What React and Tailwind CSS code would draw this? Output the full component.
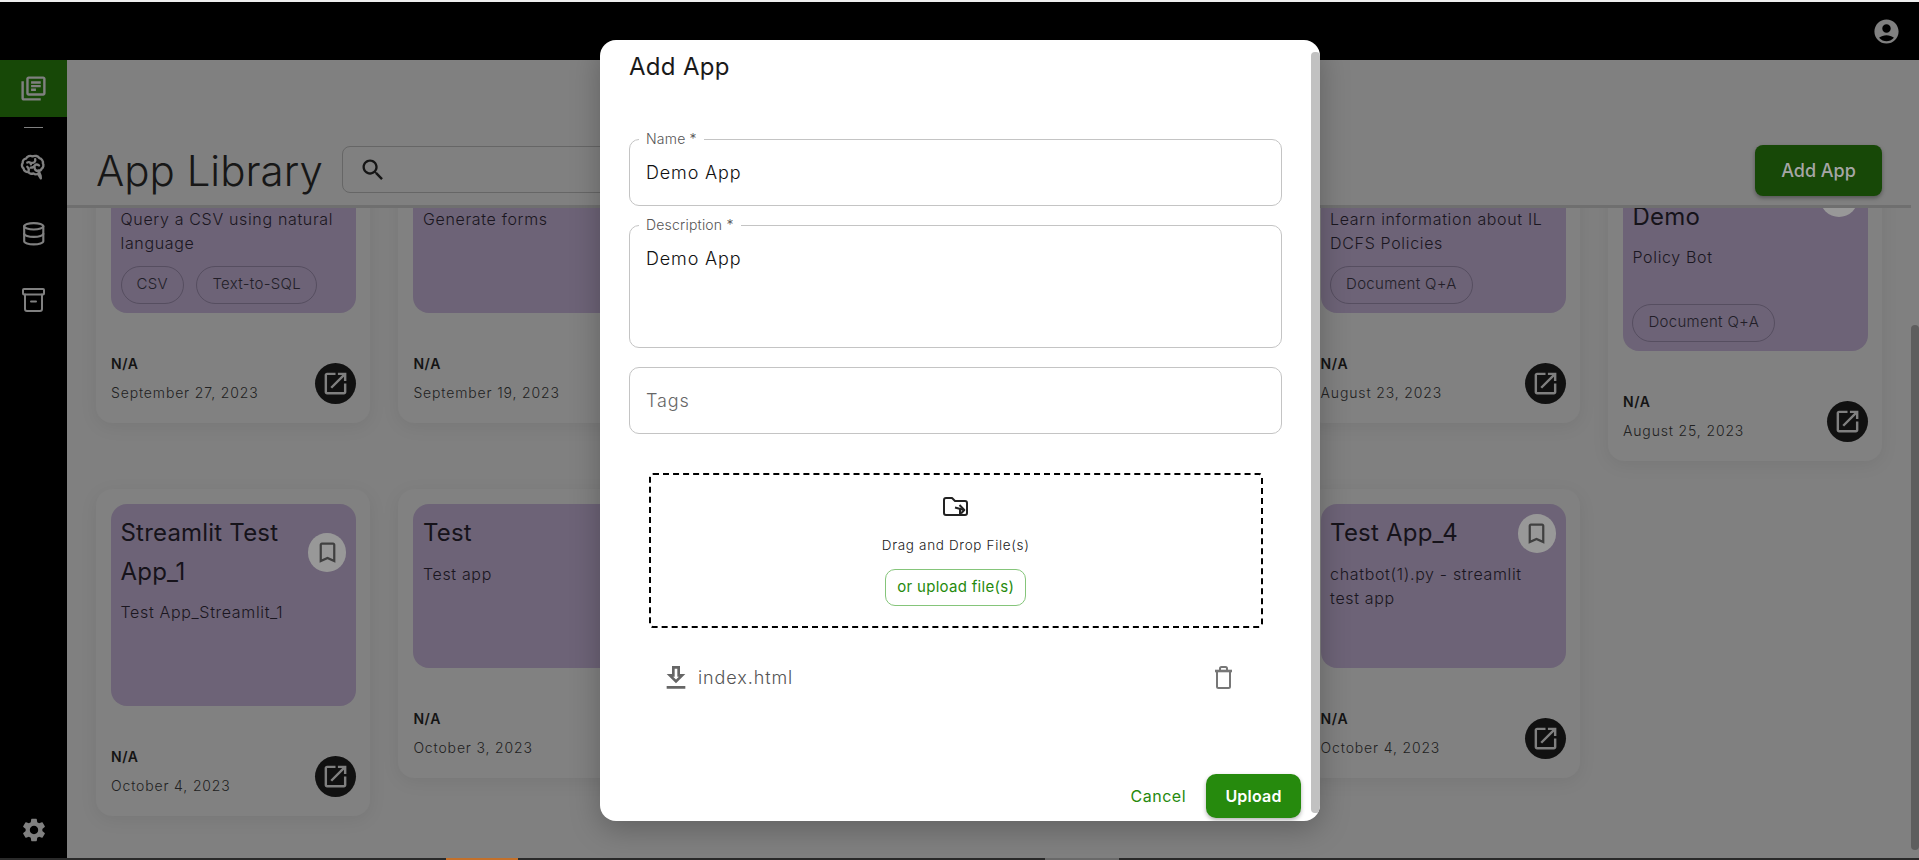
import React from "react";
import { LuDatabase } from "react-icons/lu";

const P = {
  user: "M12 2C6.48 2 2 6.48 2 12s4.48 10 10 10 10-4.48 10-10S17.52 2 12 2zm0 4c1.93 0 3.5 1.57 3.5 3.5S13.93 13 12 13s-3.5-1.57-3.5-3.5S10.07 6 12 6zm0 14c-2.03 0-4.43-.82-6.14-2.88C7.55 15.8 9.68 15 12 15s4.45.8 6.14 2.12C16.43 19.18 14.03 20 12 20z",
  search: "M15.5 14h-.79l-.28-.27C15.41 12.59 16 11.11 16 9.5 16 5.91 13.09 3 9.5 3S3 5.91 3 9.5 5.91 16 9.5 16c1.61 0 3.09-.59 4.23-1.57l.27.28v.79l5 4.99L20.49 19l-4.99-5zm-6 0C7.01 14 5 11.99 5 9.5S7.01 5 9.5 5 14 7.01 14 9.5 11.99 14 9.5 14z",
  open: "M19 19H5V5h7V3H5c-1.11 0-2 .9-2 2v14c0 1.1.89 2 2 2h14c1.1 0 2-.9 2-2v-7h-2v7zM14 3v2h3.59l-9.83 9.83 1.41 1.41L19 6.41V10h2V3h-7z",
  gear: "M19.14 12.94c.04-.3.06-.61.06-.94 0-.32-.02-.64-.07-.94l2.03-1.58c.18-.14.23-.41.12-.61l-1.92-3.32c-.12-.22-.37-.29-.59-.22l-2.39.96c-.5-.38-1.03-.7-1.62-.94l-.36-2.54c-.04-.24-.24-.41-.48-.41h-3.84c-.24 0-.43.17-.47.41l-.36 2.54c-.59.24-1.13.57-1.62.94l-2.39-.96c-.22-.08-.47 0-.59.22L2.74 8.87c-.12.21-.08.47.12.61l2.03 1.58c-.05.3-.09.63-.09.94s.02.64.07.94l-2.03 1.58c-.18.14-.23.41-.12.61l1.92 3.32c.12.22.37.29.59.22l2.39-.96c.5.38 1.03.7 1.62.94l.36 2.54c.05.24.24.41.48.41h3.84c.24 0 .44-.17.47-.41l.36-2.54c.59-.24 1.13-.56 1.62-.94l2.39.96c.22.08.47 0 .59-.22l1.92-3.32c.12-.22.07-.47-.12-.61l-2.01-1.58zM12 15.6c-1.98 0-3.6-1.62-3.6-3.6s1.62-3.6 3.6-3.6 3.6 1.62 3.6 3.6-1.62 3.6-3.6 3.6z",
  library: "M4 6H2v14c0 1.1.9 2 2 2h14v-2H4V6zm16-4H8c-1.1 0-2 .9-2 2v12c0 1.1.9 2 2 2h12c1.1 0 2-.9 2-2V4c0-1.1-.9-2-2-2zm0 14H8V4h12v12zM10 9h8v2h-8zm0 3h4v2h-4zm0-6h8v2h-8z",
  download: "M19 9h-4V3H9v6H5l7 7 7-7zm-8 2V5h2v6h1.17L12 13.17 9.83 11H11zm-6 7h14v2H5z",
  bookmark: "M17 3H7c-1.1 0-1.99.9-1.99 2L5 21l7-3 7 3V5c0-1.1-.9-2-2-2zm0 15l-5-2.18L7 18V5h10v13z",
};

function Icon({ d, className }) {
  return (
    <svg viewBox="0 0 24 24" fill="currentColor" className={className}>
      <path d={d} />
    </svg>
  );
}

function BrainIcon({ className }) {
  return (
    <svg viewBox="0 0 24 24" fill="none" stroke="currentColor" strokeWidth="2.1" strokeLinecap="round" strokeLinejoin="round" className={className}>
      <path d="M18.5 22.5l-2.6-4.2c-1.1.8-2.9.7-4-.2-1.6.8-3.6.3-4.3-1.2-2.1.3-4.2-1-4.4-3.1-1.6-1.1-2-3.5-.8-5 -.2-2 1.2-3.6 3-3.8.9-2 3.6-3 5.7-2 2.1-1 5-.4 6.1 1.6 2 .5 3.6 2.5 3.1 4.5 1 1.6.5 3.9-1.1 4.9-.3 1.2-1.3 1.9-2.6 1.9l1.7 4.2z" />
      <path d="M6.5 8.5c1.5-.9 3.2 0 3.2 1.6" />
      <path d="M13.5 5.5c.6 2-1 3.5-3.2 3.3" />
      <path d="M9.5 13c1.8 0 3.3-.7 3.8-2.1.9-1 2.6-.8 3.6.2" />
      <path d="M13 13.2c0 2 2 3.2 4 2.3" />
      <path d="M6.5 12.3c1.1.9 1.6 2.2 1.1 3.6" />
    </svg>
  );
}

function ArchiveIcon({ className }) {
  return (
    <svg viewBox="0 0 23 24" fill="none" stroke="currentColor" strokeWidth="2" strokeLinecap="round" strokeLinejoin="round" className={className}>
      <rect x="1" y="1" width="21" height="5.5" rx="1" />
      <path d="M3 6.5V21a2 2 0 0 0 2 2h13a2 2 0 0 0 2-2V6.5" />
      <path d="M9 13.5h5" />
    </svg>
  );
}

function FolderIcon({ className }) {
  return (
    <svg viewBox="0 0 25 19" fill="none" stroke="currentColor" strokeWidth="2" strokeLinejoin="round" className={className}>
      <path d="M1 3a2 2 0 0 1 2-2h6l3 3h10a2 2 0 0 1 2 2v10a2 2 0 0 1-2 2H3a2 2 0 0 1-2-2z" />
      <path d="M12 10.5l9 2.5" />
      <path d="M16.5 8l4.8 5-3.3 3.5" />
      <path d="M17 12v6" />
    </svg>
  );
}

function TrashIcon({ className }) {
  return (
    <svg viewBox="0 0 19 23" fill="none" stroke="currentColor" strokeWidth="2" className={className}>
      <path d="M3 6v14.5a1.5 1.5 0 0 0 1.5 1.5h10a1.5 1.5 0 0 0 1.5-1.5V6" />
      <path d="M1 5h17" strokeWidth="2.6" />
      <path d="M6 4V2.5a1.5 1.5 0 0 1 1.5-1.5h4A1.5 1.5 0 0 1 13 2.5V4" />
    </svg>
  );
}

function Card({ title, desc, tags = [], date }) {
  return (
    <div className="rounded-[16px] bg-[#818181] pt-[15px] pr-[14px] pb-[19px] pl-[15px] shadow-[0_4px_18px_rgba(0,0,0,0.07)]">
      <div className="rounded-[16px] bg-[#6d6377] pt-[10px] pr-[10px] pb-[9.5px] pl-[9.5px]">
        <div className="flex items-center justify-between gap-[4px]">
          <div className="min-w-0 flex-1 text-[24px] leading-[38.5px] tracking-[0.2px] text-[#16131a]">{title || "\u00a0"}</div>
          <div className="flex h-[39px] w-[38px] shrink-0 items-center justify-center rounded-full bg-[#989898]">
            <Icon d={P.bookmark} className="h-[27px] w-[27px] text-[#404040]" />
          </div>
        </div>
        <div className="mt-[9px] min-h-[48px] text-[16px] leading-[24px] font-light tracking-[0.66px] text-[#1a1620]">{desc}</div>
        <div className="mt-[10.5px] flex h-[38px] gap-[12.5px]">
          {tags.map((t) => (
            <span key={t} className="flex h-[38px] items-center rounded-full border border-[#564e60] px-[15px] text-[15px] font-light tracking-[0.3px] text-[#221e28]">
              {t}
            </span>
          ))}
        </div>
      </div>
      <div className="mt-[40px] flex items-start justify-between">
        <div>
          <div className="text-[14px] leading-[22px] font-semibold tracking-[0.6px] text-[#141414]">N/A</div>
          <div className="mt-[6.5px] text-[14px] leading-[22px] font-light tracking-[0.85px] text-[#222222]">{date}</div>
        </div>
        <div className="mt-[10px] flex h-[41px] w-[41px] items-center justify-center rounded-full bg-[#111111]">
          <Icon d={P.open} className="h-[29px] w-[29px] text-[#808080]" />
        </div>
      </div>
    </div>
  );
}

function Field({ label, h, value, muted, mt }) {
  return (
    <div className={`relative shrink-0 rounded-[10px] border border-[#c4c4c4] px-[16px] ${h} ${mt}`}>
      {label && (
        <span className="absolute top-[-10px] left-[9px] bg-white px-[7px] text-[14px] leading-[18px] font-light tracking-[0.2px] text-[#555555]">{label}</span>
      )}
      <div className={`mt-[21px] text-[18px] leading-[24px] font-light tracking-[0.85px] ${muted ? "text-[#666666]" : "text-[#111111]"}`}>{value}</div>
    </div>
  );
}

export default function App() {
  return (
    <div className="relative flex h-[860px] w-full flex-col overflow-hidden bg-[#808080] font-['Inter','Liberation_Sans',sans-serif]">
      <div className="h-[2px] shrink-0 bg-[#eeeeee]" />
      <div className="flex h-[58px] shrink-0 items-center justify-end bg-black pr-[18.5px]">
        <Icon d={P.user} className="h-[29px] w-[29px] text-[#808080]" />
      </div>

      <div className="flex min-h-0 flex-1">
        <aside className="flex w-[67px] shrink-0 flex-col items-center bg-black text-[#808080]">
          <div className="flex h-[57px] w-full items-center justify-center bg-[#174807]">
            <Icon d={P.library} className="h-[29px] w-[29px]" />
          </div>
          <div className="mt-[10px] h-px w-[19px] bg-[#808080]" />
          <BrainIcon className="mt-[25px] h-[27px] w-[27px]" />
          <LuDatabase className="mt-[40.5px] h-[25.5px] w-[25.5px]" />
          <ArchiveIcon className="mt-[42px] h-[24px] w-[23px]" />
          <Icon d={P.gear} className="mt-auto mb-[14px] h-[28px] w-[28px]" />
        </aside>

        <main className="flex min-w-0 flex-1 flex-col">
          <div className="flex h-[148px] shrink-0 flex-col">
            <div className="flex h-[145px] items-end">
              <div className="mb-[9px] flex h-[51px] w-full items-center px-[29px]">
                <h1 className="text-[42px] leading-[51px] font-light text-[#171717]">App Library</h1>
                <div className="ml-[19px] flex h-[47px] w-[600px] items-center rounded-[8px] border border-[#666666] pl-[16px] -mt-[2px]">
                  <Icon d={P.search} className="h-[28px] w-[28px] text-[#151515]" />
                </div>
                <button className="ml-auto h-[51px] w-[127px] rounded-[8px] bg-[#174807] text-[18px] font-medium text-[#a6a6a6] shadow-[0_2px_4px_rgba(0,0,0,0.35)]">
                  Add App
                </button>
              </div>
            </div>
            <div className="h-[3px] bg-[#6f6f6f]" />
          </div>
          <div className="min-h-0 flex-1 overflow-hidden">
            <div className="-mt-[74px] grid grid-cols-6 items-start gap-x-[28.4px] gap-y-[28px] px-[29px]">
              <Card title="CSV Query" desc="Query a CSV using natural language" tags={["CSV", "Text-to-SQL"]} date="September 27, 2023" />
              <Card title="Form Generator" desc="Generate forms" date="September 19, 2023" />
              <Card desc="" date="" />
              <Card desc="" date="" />
              <Card title="Policy Bot" desc="Learn information about IL DCFS Policies" tags={["Document Q+A"]} date="August 23, 2023" />
              <Card title="Policy Bot Demo" desc="Policy Bot" tags={["Document Q+A"]} date="August 25, 2023" />
              <Card title="Streamlit Test App_1" desc="Test App_Streamlit_1" date="October 4, 2023" />
              <Card title="Test" desc="Test app" date="October 3, 2023" />
              <Card desc="" date="" />
              <Card desc="" date="" />
              <Card title="Test App_4" desc="chatbot(1).py - streamlit test app" date="October 4, 2023" />
            </div>
          </div>
        </main>

        <div className="w-[8px] shrink-0 bg-[#808080]">
          <div className="mt-[265px] h-[525px] rounded-[4px] bg-[#5e5e5e]" />
        </div>
      </div>

      <div className="flex h-[2px] shrink-0 bg-[#2a2a2a]">
        <div className="ml-[446px] w-[72px] bg-[#c4702a]" />
        <div className="ml-[527px] w-[74px] bg-[#6a6a6a]" />
      </div>

      <div className="absolute top-[40px] left-[600px] flex h-[781px] w-[720px] overflow-hidden rounded-[16px] bg-white shadow-[0_8px_30px_rgba(0,0,0,0.25)]">
        <div className="flex min-w-0 flex-1 flex-col pt-[11px] pl-[29px]">
          <h2 className="text-[24px] leading-[32px] font-normal tracking-[0.3px] text-[#1a1a1a]">Add App</h2>
          <div className="flex flex-col pr-[29.5px]">
            <Field label="Name *" h="h-[67px]" mt="mt-[56px]" value="Demo App" />
            <Field label="Description *" h="h-[123px]" mt="mt-[19px]" value="Demo App" />
            <Field h="h-[67px]" mt="mt-[19px]" value="Tags" muted />
          </div>
          <div className="mt-[38.5px] ml-[20px] flex h-[155px] w-[613.5px] shrink-0 flex-col items-center rounded-[4px] border-2 border-dashed border-black">
            <FolderIcon className="mt-[22px] h-[19px] w-[25px] text-[#222222]" />
            <div className="mt-[19px] text-[13.5px] leading-[20px] font-light tracking-[0.66px] text-[#1b1b1b]">Drag and Drop File(s)</div>
            <button className="mt-[14px] h-[37px] w-[141px] rounded-[10px] border border-[#85c57a] text-[15px] tracking-[0.3px] text-[#268a0d]">or upload file(s)</button>
          </div>
          <div className="mt-[37px] flex h-[26px] shrink-0 items-center pr-[78.5px] pl-[31px]">
            <Icon d={P.download} className="h-[32px] w-[32px] text-[#666666]" />
            <span className="ml-[6px] text-[18px] font-light tracking-[0.9px] text-[#555555]">index.html</span>
            <TrashIcon className="ml-auto h-[23px] w-[19px] text-[#777777]" />
          </div>
          <div className="mt-[83px] flex shrink-0 items-center justify-end pr-[10px]">
            <span className="text-[16px] font-normal tracking-[0.5px] text-[#268a0d]">Cancel</span>
            <button className="ml-[20px] h-[44px] w-[95px] rounded-[10px] bg-[#268a0d] text-[16px] font-semibold tracking-[0.2px] text-white shadow-[0_2px_4px_rgba(0,0,0,0.3)]">
              Upload
            </button>
          </div>
        </div>
        <div className="w-[9px] shrink-0 pt-[12px] pb-[8px]">
          <div className="h-full rounded-[4px] bg-[#c1c1c1]" />
        </div>
      </div>
    </div>
  );
}
